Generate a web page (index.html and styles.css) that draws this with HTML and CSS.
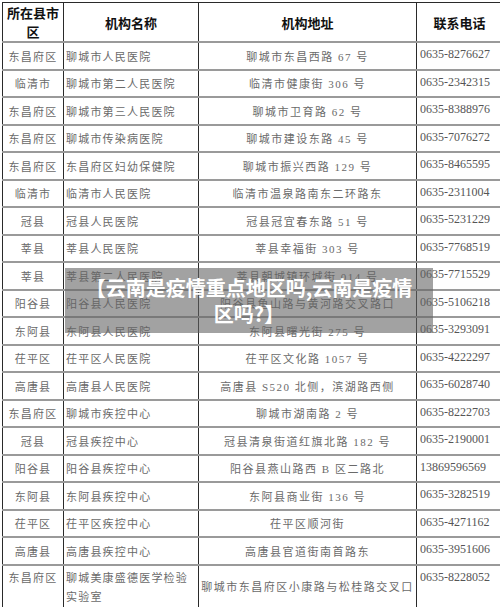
FILE: index.html
```html
<!DOCTYPE html>
<html lang="zh">
<head>
<meta charset="utf-8">
<link rel="stylesheet" href="styles.css">
</head>
<body>
<div class="wrap">
<table class="tbl">
<colgroup>
<col class="c1"><col class="c2"><col class="c3"><col class="c4">
</colgroup>
<thead>
<tr class="head"><th>所在县市区</th><th>机构名称</th><th>机构地址</th><th>联系电话</th></tr>
</thead>
<tbody>
<tr><td class="area">东昌府区</td><td class="name">聊城市人民医院</td><td class="addr">聊城市东昌西路 67 号</td><td class="tel">0635-8276627</td></tr>
<tr><td class="area">临清市</td><td class="name">聊城市第二人民医院</td><td class="addr">临清市健康街 306 号</td><td class="tel">0635-2342315</td></tr>
<tr><td class="area">东昌府区</td><td class="name">聊城市第三人民医院</td><td class="addr">聊城市卫育路 62 号</td><td class="tel">0635-8388976</td></tr>
<tr><td class="area">东昌府区</td><td class="name">聊城市传染病医院</td><td class="addr">聊城市建设东路 45 号</td><td class="tel">0635-7076272</td></tr>
<tr><td class="area">东昌府区</td><td class="name">东昌府区妇幼保健院</td><td class="addr">聊城市振兴西路 129 号</td><td class="tel">0635-8465595</td></tr>
<tr><td class="area">临清市</td><td class="name">临清市人民医院</td><td class="addr">临清市温泉路南东二环路东</td><td class="tel">0635-2311004</td></tr>
<tr><td class="area">冠县</td><td class="name">冠县人民医院</td><td class="addr">冠县冠宜春东路 51 号</td><td class="tel">0635-5231229</td></tr>
<tr><td class="area">莘县</td><td class="name">莘县人民医院</td><td class="addr">莘县幸福街 303 号</td><td class="tel">0635-7768519</td></tr>
<tr><td class="area">莘县</td><td class="name">莘县第二人民医院</td><td class="addr">莘县朝城镇环城街 014 号</td><td class="tel">0635-7715529</td></tr>
<tr><td class="area">阳谷县</td><td class="name">阳谷县人民医院</td><td class="addr">阳谷县鱼山路与黄河路交叉路口</td><td class="tel">0635-5106218</td></tr>
<tr><td class="area">东阿县</td><td class="name">东阿县人民医院</td><td class="addr">东阿县曙光街 275 号</td><td class="tel">0635-3293091</td></tr>
<tr><td class="area">茌平区</td><td class="name">茌平区人民医院</td><td class="addr">茌平区文化路 1057 号</td><td class="tel">0635-4222297</td></tr>
<tr><td class="area">高唐县</td><td class="name">高唐县人民医院</td><td class="addr">高唐县 S520 北侧，滨湖路西侧</td><td class="tel">0635-6028740</td></tr>
<tr><td class="area">东昌府区</td><td class="name">聊城市疾控中心</td><td class="addr">聊城市湖南路 2 号</td><td class="tel">0635-8222703</td></tr>
<tr><td class="area">冠县</td><td class="name">冠县疾控中心</td><td class="addr">冠县清泉街道红旗北路 182 号</td><td class="tel">0635-2190001</td></tr>
<tr><td class="area">阳谷县</td><td class="name">阳谷县疾控中心</td><td class="addr">阳谷县燕山路西 B 区二路北</td><td class="tel">13869596569</td></tr>
<tr><td class="area">东阿县</td><td class="name">东阿县疾控中心</td><td class="addr">东阿县商业街 136 号</td><td class="tel">0635-3282519</td></tr>
<tr><td class="area">茌平区</td><td class="name">茌平区疾控中心</td><td class="addr">茌平区顺河街</td><td class="tel">0635-4271162</td></tr>
<tr><td class="area">高唐县</td><td class="name">高唐县疾控中心</td><td class="addr">高唐县官道街南首路东</td><td class="tel">0635-3951606</td></tr>
<tr class="tall"><td class="area top">东昌府区</td><td class="name top">聊城美康盛德医学检验实验室</td><td class="addr">聊城市东昌府区小康路与松桂路交叉口</td><td class="tel">0635-8228052</td></tr>
</tbody>
</table>
<div class="banner">
<p class="banner-text">【云南是疫情重点地区吗,云南是疫情<br>区吗?】</p>
</div>
</div>
</body>
</html>
```
FILE: styles.css
```css
html, body {
  margin: 0;
  padding: 0;
  background: #ffffff;
}
.wrap {
  position: relative;
  width: 500px;
  height: 607px;
  overflow: hidden;
  padding: 2px 0 0 2px;
  box-sizing: border-box;
}
.tbl {
  border-collapse: collapse;
  table-layout: fixed;
  width: 500px;
  font-family: "Liberation Serif", "Noto Sans CJK SC", serif;
  color: #6a6a6a;
}
.c1 { width: 61px; }
.c2 { width: 135px; }
.c3 { width: 218px; }
.c4 { width: 86px; }
.tbl th, .tbl td {
  border-left: 1px solid #2a2a2a;
  border-right: 1px solid #2a2a2a;
  border-top: 2px solid #9a9a9a;
  border-bottom: 2px solid #9a9a9a;
  padding: 0;
  overflow: hidden;
  white-space: nowrap;
}
.tbl tr:first-child th {
  border-top: 1px solid #2a2a2a;
}
.head th {
  height: 38px;
  font-family: "Noto Sans CJK SC", sans-serif;
  font-weight: 700;
  font-size: 13px;
  line-height: 19px;
  color: #111;
  white-space: normal;
  text-align: center;
  vertical-align: middle;
}
.head th:first-child {
  padding: 0 3px;
}
.tbl tbody tr {
  height: 27.5px;
}
.tbl tbody tr.tall {
  height: 40px;
}
.area {
  text-align: center;
  font-size: 11px;
  letter-spacing: 1.2px;
}
.name {
  text-align: left;
  font-size: 11px;
  letter-spacing: 1.2px;
  padding-left: 2px !important;
}
.addr {
  text-align: center;
  font-size: 11px;
  letter-spacing: 1.5px;
}
.tel {
  text-align: left;
  font-size: 12px;
  color: #555;
  vertical-align: top;
  padding-top: 4px !important;
  padding-left: 3px !important;
}
.top {
  vertical-align: top;
  padding-top: 3px !important;
}
.name.top {
  white-space: normal;
  width: 122px;
  line-height: 19px;
}
.banner {
  position: absolute;
  left: 65px;
  top: 268px;
  width: 368px;
  height: 65px;
  background: rgba(100, 100, 100, 0.6);
  display: flex;
  align-items: center;
  justify-content: center;
}
.banner-text {
  margin: 0;
  text-align: center;
  white-space: nowrap;
  font-family: "Noto Sans CJK SC", sans-serif;
  font-weight: 700;
  font-size: 20px;
  line-height: 26px;
  color: #ffffff;
}
```
